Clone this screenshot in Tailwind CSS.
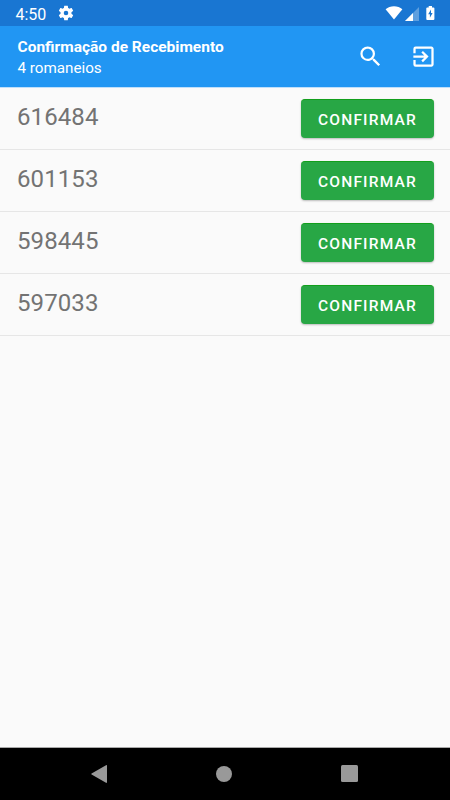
<!DOCTYPE html>
<html lang="pt-BR">
<head>
    <meta charset="UTF-8">
    <meta name="viewport" content="width=device-width, initial-scale=1.0">
    <title>Confirmação de Recebimento</title>
    <script src="https://cdn.jsdelivr.net/npm/@tailwindcss/browser@4"></script>
</head>
<body class="bg-[#fafafa] font-[Roboto,sans-serif]">
    <div class="h-[800px] w-[450px] flex flex-col overflow-hidden">
        <!-- Barra de status -->
        <div class="h-[26px] shrink-0 bg-[#1976d2] text-white flex items-center pl-[15.5px] pr-[15.5px]">
            <span class="text-[16px] leading-[26px] pt-[3px] w-[31px]">4:50</span>
            <svg class="w-4 h-4 ml-[11px]" viewBox="1.500 1.500 21 21" fill="currentColor">
                <path d="M19.14 12.94c.04-.3.06-.61.06-.94 0-.32-.02-.64-.07-.94l2.03-1.58c.18-.14.23-.41.12-.61l-1.92-3.32c-.12-.22-.37-.29-.59-.22l-2.39.96c-.5-.38-1.03-.7-1.62-.94l-.36-2.54c-.04-.24-.24-.41-.48-.41h-3.84c-.24 0-.43.17-.47.41l-.36 2.54c-.59.24-1.13.57-1.62.94l-2.39-.96c-.22-.08-.47 0-.59.22L2.74 8.87c-.12.21-.08.47.12.61l2.03 1.58c-.05.3-.09.63-.09.94s.02.64.07.94l-2.03 1.58c-.18.14-.23.41-.12.61l1.92 3.32c.12.22.37.29.59.22l2.39-.96c.5.38 1.03.7 1.62.94l.36 2.54c.05.24.24.41.48.41h3.84c.24 0 .44-.17.47-.41l.36-2.54c.59-.24 1.13-.56 1.62-.94l2.39.96c.22.08.47 0 .59-.22l1.92-3.32c.12-.22.07-.47-.12-.61l-2.01-1.58zM12 15a3 3 0 1 1 0-6 3 3 0 0 1 0 6z"/>
            </svg>
            <div class="ml-auto flex items-center">
                <!-- Wi-Fi -->
                <svg class="w-[18px] h-[14px]" viewBox="0 0 18 14" fill="currentColor">
                    <path d="M9 13.500.6 3.200C2.900 1.200 5.800.2 9 .2s6.100 1 8.400 3z"/>
                </svg>
                <!-- Sinal -->
                <svg class="w-[14px] h-[14px] ml-[2px] mt-px" viewBox="0 0 14 14" fill="currentColor">
                    <path d="M0 14 14 0v14z" opacity=".3"/>
                    <path d="M0 14 8 6v8z"/>
                </svg>
                <!-- Bateria -->
                <svg class="w-[9px] h-[14px] ml-[7px]" viewBox="0 0 9 14">
                    <path d="M2.700 0h3.300v1.400h1.500c.5 0 .9.4.9.9v10.800c0 .5-.4.9-.9.9H1.200c-.5 0-.9-.4-.9-.9V2.300c0-.5.4-.9.9-.9h1.500z" fill="#fff"/>
                    <path d="M5 3.500 2.200 8.200h1.700v3.600l2.700-4.900H5z" fill="#1976d2"/>
                </svg>
            </div>
        </div>

        <!-- Cabeçalho -->
        <div class="h-[61px] shrink-0 bg-[#2196f3] text-white flex items-center pl-[17.5px] pr-[13px] shadow-[0_1px_0_#bfdffb]">
            <div class="pt-[2px]">
                <h1 class="text-[15.5px] font-bold leading-[21px]">Confirmação de Recebimento</h1>
                <p class="text-[15.2px] leading-[21px]">4 romaneios</p>
            </div>
            <button class="ml-auto">
                <svg class="w-[27px] h-[27px]" viewBox="0 0 24 24" fill="currentColor">
                    <path d="M15.5 14h-.79l-.28-.27A6.471 6.471 0 0 0 16 9.500 6.500 6.500 0 1 0 9.500 16c1.610 0 3.090-.59 4.230-1.570l.27.28v.79l5 4.990L20.490 19l-4.990-5zm-6 0C7.010 14 5 11.990 5 9.500S7.010 5 9.500 5 14 7.010 14 9.500 11.990 14 9.500 14z"/>
                </svg>
            </button>
            <button class="ml-[26px]">
                <svg class="w-[27px] h-[27px]" viewBox="0 0 24 24" fill="currentColor">
                    <path d="M10.090 15.590 11.500 17l5-5-5-5-1.410 1.410L12.670 11H3v2h9.670l-2.580 2.590zM19 3H5a2 2 0 0 0-2 2v4h2V5h14v14H5v-4H3v4a2 2 0 0 0 2 2h14c1.100 0 2-.9 2-2V5c0-1.100-.9-2-2-2z"/>
                </svg>
            </button>
        </div>

        <!-- Lista de romaneios -->
        <ul class="flex-1 pt-px">
            <li class="h-[62px] flex items-start justify-between pl-[17px] pr-[16.5px] border-b border-[#e6e6e6]">
                <span class="pt-[13px] text-[24px] leading-8 tracking-[0.1px] text-[#737373]">616484</span>
                <button class="mt-[11px] w-[133px] h-[39px] rounded-[4px] bg-[#28a745] border-t border-[#129f1c] text-white text-[15.5px] font-medium tracking-[1.2px] pl-px pt-[3px] shadow-[0_1px_2px_rgba(0,0,0,0.25)]">CONFIRMAR</button>
            </li>
            <li class="h-[62px] flex items-start justify-between pl-[17px] pr-[16.5px] border-b border-[#e6e6e6]">
                <span class="pt-[13px] text-[24px] leading-8 tracking-[0.1px] text-[#737373]">601153</span>
                <button class="mt-[11px] w-[133px] h-[39px] rounded-[4px] bg-[#28a745] border-t border-[#129f1c] text-white text-[15.5px] font-medium tracking-[1.2px] pl-px pt-[3px] shadow-[0_1px_2px_rgba(0,0,0,0.25)]">CONFIRMAR</button>
            </li>
            <li class="h-[62px] flex items-start justify-between pl-[17px] pr-[16.5px] border-b border-[#e6e6e6]">
                <span class="pt-[13px] text-[24px] leading-8 tracking-[0.1px] text-[#737373]">598445</span>
                <button class="mt-[11px] w-[133px] h-[39px] rounded-[4px] bg-[#28a745] border-t border-[#129f1c] text-white text-[15.5px] font-medium tracking-[1.2px] pl-px pt-[3px] shadow-[0_1px_2px_rgba(0,0,0,0.25)]">CONFIRMAR</button>
            </li>
            <li class="h-[62px] flex items-start justify-between pl-[17px] pr-[16.5px] border-b border-[#e6e6e6]">
                <span class="pt-[13px] text-[24px] leading-8 tracking-[0.1px] text-[#737373]">597033</span>
                <button class="mt-[11px] w-[133px] h-[39px] rounded-[4px] bg-[#28a745] border-t border-[#129f1c] text-white text-[15.5px] font-medium tracking-[1.2px] pl-px pt-[3px] shadow-[0_1px_2px_rgba(0,0,0,0.25)]">CONFIRMAR</button>
            </li>
        </ul>

        <!-- Barra de navegação -->
        <div class="h-[53px] shrink-0 bg-black border-t border-[#a8a8a8] flex items-center justify-between pl-[91px] pr-[92.5px] pb-px text-[#999]">
            <svg class="w-4 h-[18px]" viewBox="0 0 16 18" fill="currentColor">
                <path d="M.6 8.400 15 .2c.5-.3 1 0 1 .5v16.600c0 .5-.5.8-1 .5L.6 9.600c-.5-.3-.5-.9 0-1.200z"/>
            </svg>
            <div class="w-4 h-4 rounded-full bg-[#999] ml-px"></div>
            <div class="w-[17px] h-[17px] rounded-[1.5px] bg-[#999]"></div>
        </div>
    </div>
</body>
</html>
